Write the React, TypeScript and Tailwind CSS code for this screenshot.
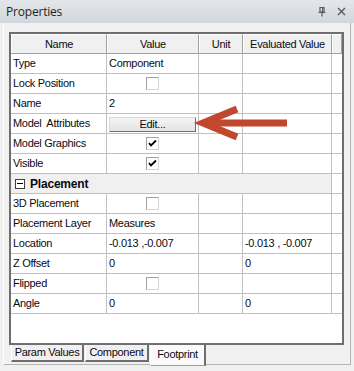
import React from 'react';

type Row =
  | { kind: 'text'; name: string; value?: string; evaluated?: string }
  | { kind: 'check'; name: string; checked: boolean }
  | { kind: 'button'; name: string; label: string }
  | { kind: 'group'; name: string };

const rows: Row[] = [
  { kind: 'text', name: 'Type', value: 'Component' },
  { kind: 'check', name: 'Lock Position', checked: false },
  { kind: 'text', name: 'Name', value: '2' },
  { kind: 'button', name: 'Model  Attributes', label: 'Edit...' },
  { kind: 'check', name: 'Model Graphics', checked: true },
  { kind: 'check', name: 'Visible', checked: true },
  { kind: 'group', name: 'Placement' },
  { kind: 'check', name: '3D Placement', checked: false },
  { kind: 'text', name: 'Placement Layer', value: 'Measures' },
  { kind: 'text', name: 'Location', value: '-0.013 ,-0.007', evaluated: '-0.013 , -0.007' },
  { kind: 'text', name: 'Z Offset', value: '0', evaluated: '0' },
  { kind: 'check', name: 'Flipped', checked: false },
  { kind: 'text', name: 'Angle', value: '0', evaluated: '0' },
];

const font = "font-['Liberation_Sans',Arial,sans-serif] text-[11px] tracking-[-0.3px] text-[#0a0a14]";

const CheckBox: React.FC<{ checked: boolean }> = ({ checked }) => (
  <div className="w-[13px] h-[13px] bg-white border border-t-[#a0a0a0] border-l-[#a0a0a0] border-r-[#d4d4d4] border-b-[#d4d4d4] flex items-center justify-center">
    {checked && (
      <svg width="9" height="9" viewBox="0 0 9 9">
        <path d="M1 4 L3 6.5 L8 1.5" fill="none" stroke="#000" strokeWidth="1.8" />
      </svg>
    )}
  </div>
);

const HeaderCell: React.FC<{ w: string; label?: string }> = ({ w, label }) => (
  <div className={`${w} h-full flex items-center justify-center bg-[#f0f0f0] border-t border-l border-t-white border-l-white border-r border-r-[#a0a0a0]`}>
    {label}
  </div>
);

const GridRow: React.FC<{ row: Row }> = ({ row }) => {
  if (row.kind === 'group') {
    return (
      <div className="flex h-[20px] border-b border-[#c0c0c0]">
        <div className="w-[321px] bg-[#f0f0f0] border-r border-[#c0c0c0] flex items-center pl-[4px] gap-[5px]">
          <div className="w-[10px] h-[10px] border border-[#404040] bg-white flex items-center justify-center">
            <div className="w-[6px] h-[1px] bg-black" />
          </div>
          <span className="font-bold tracking-[-0.2px] text-[12px]">{row.name}</span>
        </div>
        <div className="flex-1" />
      </div>
    );
  }
  return (
    <div className="flex h-[20px] border-b border-[#c0c0c0]">
      <div className="w-[96px] border-r border-[#c0c0c0] flex items-center pl-[2px] whitespace-pre">{row.name}</div>
      <div className="w-[92px] border-r border-[#c0c0c0] flex items-center">
        {row.kind === 'text' && <span className="pl-[2px]">{row.value}</span>}
        {row.kind === 'check' && (
          <div className="w-full flex justify-center">
            <CheckBox checked={row.checked} />
          </div>
        )}
        {row.kind === 'button' && (
          <div className="w-full h-full pl-[2px] pr-[2px] pt-[3px] pb-[1px]">
            <div className="h-full flex items-center justify-center bg-gradient-to-b from-[#f4f4f4] to-[#e4e4e4] border border-t-[#d8d8d8] border-l-[#d8d8d8] border-r-[#707070] border-b-[#707070]">
              {row.label}
            </div>
          </div>
        )}
      </div>
      <div className="w-[44px] border-r border-[#c0c0c0]" />
      <div className="w-[89px] border-r border-[#c0c0c0] flex items-center pl-[2px]">
        {row.kind === 'text' && row.evaluated}
      </div>
      <div className="flex-1" />
    </div>
  );
};

const Tab: React.FC<{ label: string; w: string; selected?: boolean }> = ({ label, w, selected }) => (
  <div
    className={
      selected
        ? `${w} h-[21px] bg-[#fafafa] border-l border-l-white border-r-2 border-r-[#6e6e6e] border-b border-b-[#a0a0a0] flex items-end justify-center pb-[3px]`
        : `${w} h-[17px] bg-[#f0f0f0] border-l border-l-white border-r-2 border-r-[#6e6e6e] border-b-2 border-b-[#6e6e6e] flex items-center justify-center`
    }
  >
    {label}
  </div>
);

export default function App() {
  return (
    <div className={`relative w-[354px] h-[371px] bg-[#f0f0f0] overflow-hidden ${font}`}>
      <div className="h-[23px] bg-gradient-to-b from-[#e3e6ea] to-[#d3d7dc] flex items-center pl-[6px] pr-[8px]">
        <span className="font-['Open_Sans',sans-serif] text-[12px] tracking-[-0.2px] text-[#1e1e1e] flex-1">Properties</span>
        <svg width="10" height="11" viewBox="0 0 10 11" className="mr-[10px]">
          <path d="M3 1.5 H7 V6 H3 Z M1.5 6.5 H8.5 M5 6.5 V10.5" fill="none" stroke="#5a5a5a" strokeWidth="1.2" />
          <path d="M5.5 2 V6" stroke="#5a5a5a" strokeWidth="1" />
        </svg>
        <svg width="9" height="9" viewBox="0 0 9 9">
          <path d="M1 1 L8 8 M8 1 L1 8" stroke="#5a5a5a" strokeWidth="1.4" />
        </svg>
      </div>
      <div className="ml-[3px] mr-[3px] h-[342px] border-l border-white border-r border-r-[#b4b4b4] border-b border-b-[#b4b4b4] pl-[5px] pt-[9px] pr-[4px]">
        <div className="w-[335px] h-[313px] border-2 border-[#6e6e6e] bg-white flex flex-col">
          <div className="flex h-[20px] border-b border-[#a0a0a0]">
            <HeaderCell w="w-[96px]" label="Name" />
            <HeaderCell w="w-[92px]" label="Value" />
            <HeaderCell w="w-[44px]" label="Unit" />
            <HeaderCell w="w-[89px]" label="Evaluated Value" />
            <HeaderCell w="flex-1" />
          </div>
          {rows.map((r, i) => (
            <GridRow key={i} row={r} />
          ))}
        </div>
        <div className="flex pl-[2px] gap-[1px]">
          <Tab label="Param Values" w="w-[73px]" />
          <Tab label="Component" w="w-[64px]" />
          <Tab label="Footprint" w="w-[56px]" selected />
        </div>
      </div>
      <svg className="absolute left-0 top-0 pointer-events-none" width="354" height="371">
        <path d="M237 109 L203 123 L237 137" fill="none" stroke="#c1472f" strokeWidth="7" strokeLinejoin="miter" />
        <path d="M206 123 H287" stroke="#c1472f" strokeWidth="7" />
      </svg>
    </div>
  );
}
